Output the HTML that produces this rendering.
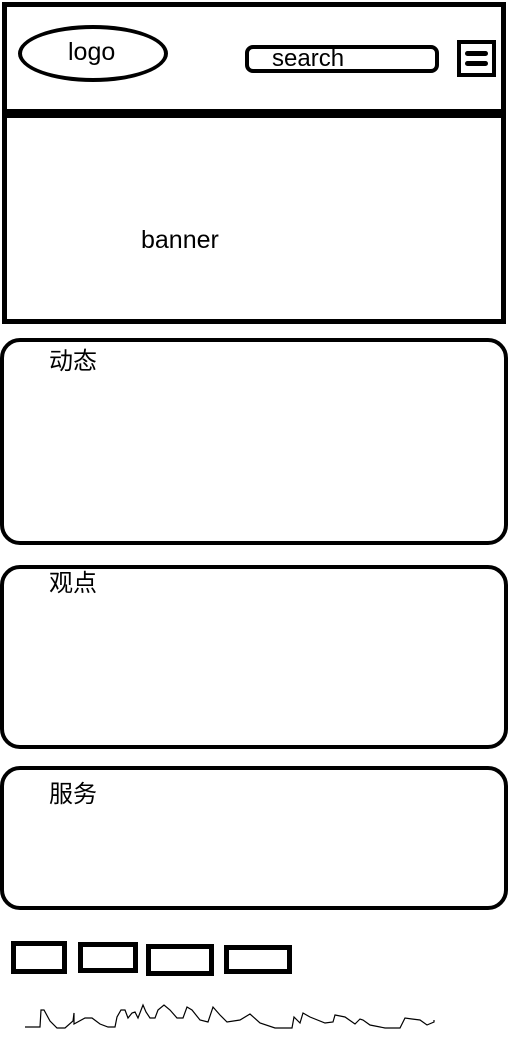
<!DOCTYPE html>
<html><head><meta charset="utf-8"><style>
html,body{margin:0;padding:0;background:#fff;width:508px;height:1046px;overflow:hidden;position:relative;font-family:"Liberation Sans","Noto Sans CJK SC",sans-serif;color:#000}
.a{position:absolute;box-sizing:border-box}
.t{position:absolute;white-space:nowrap;line-height:1}
</style></head><body>
<div class="a" style="left:2px;top:2px;width:504px;height:112px;border:5px solid #000;border-bottom:none"></div>
<div class="a" style="left:2px;top:109px;width:504px;height:9px;background:#000"></div>
<div class="a" style="left:18px;top:25px;width:150px;height:57px;border:4px solid #000;border-radius:50%"></div>
<div class="t" style="left:68px;top:40px;font-size:25px">logo</div>
<div class="a" style="left:245px;top:45px;width:194px;height:28px;border:4px solid #000;border-radius:8px"></div>
<div class="t" style="left:272px;top:47px;font-size:24px">search</div>
<div class="a" style="left:457px;top:40px;width:39px;height:37px;border:4px solid #000"></div>
<div class="a" style="left:465px;top:51px;width:23px;height:5px;background:#000;border-radius:3px"></div>
<div class="a" style="left:465px;top:61px;width:23px;height:5px;background:#000;border-radius:3px"></div>
<div class="a" style="left:2px;top:114px;width:504px;height:210px;border:5px solid #000;border-top:none"></div>
<div class="t" style="left:141px;top:228px;font-size:25px">banner</div>
<div class="a" style="left:0px;top:338px;width:508px;height:207px;border:4px solid #000;border-radius:20px"></div>
<div class="t" style="left:49px;top:350px;font-size:24px">动态</div>
<div class="a" style="left:0px;top:565px;width:508px;height:184px;border:4px solid #000;border-radius:20px"></div>
<div class="t" style="left:49px;top:572px;font-size:24px">观点</div>
<div class="a" style="left:0px;top:766px;width:508px;height:144px;border:4px solid #000;border-radius:20px"></div>
<div class="t" style="left:49px;top:783px;font-size:24px">服务</div>
<div class="a" style="left:11px;top:941px;width:56px;height:33px;border:5px solid #000"></div>
<div class="a" style="left:78px;top:942px;width:60px;height:31px;border:5px solid #000"></div>
<div class="a" style="left:146px;top:944px;width:68px;height:32px;border:5px solid #000"></div>
<div class="a" style="left:224px;top:945px;width:68px;height:29px;border:5px solid #000"></div>
<svg class="a" style="left:0;top:0" width="508" height="1046"><polyline fill="none" stroke="#000" stroke-width="1.2" points="25,1027 40,1027 41,1010 44,1010 50,1021 57,1028 65,1028 73,1021 74,1013 74,1024 85,1018 92,1018 100,1024 108,1027 115,1027 117,1017 121,1010 125,1010 128,1018 132,1013 135,1012 138,1018 143,1005 146,1012 150,1018 155,1018 158,1010 164,1005 170,1010 177,1018 183,1018 187,1007 192,1010 200,1020 208,1022 213,1007 220,1015 227,1022 240,1020 250,1014 260,1023 275,1028 292,1028 294,1017 300,1023 303,1013 310,1017 325,1023 333,1022 335,1015 345,1017 355,1024 360,1019 363,1020 370,1025 385,1028 400,1028 405,1018 412,1019 420,1020 427,1025 434,1022 434,1020"/></svg>
</body></html>
